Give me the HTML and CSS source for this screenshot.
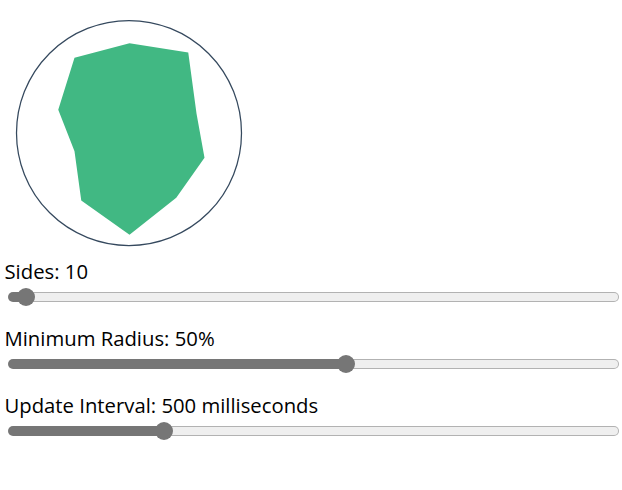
FILE: index.html
```html
<!DOCTYPE html>
<html>
<head>
<meta charset="utf-8">
<link rel="stylesheet" href="styles.css">
</head>
<body>
<svg class="shape" width="250" height="250" viewBox="0 0 200 200">
  <polygon class="poly" points="100.4,28.2 147.4,35.6 154,84.4 160.4,119.8 137.8,151.8 100.4,181.4 61.8,154 56.4,114.6 43.4,81.4 56.4,39.8"></polygon>
  <circle class="ring" cx="100" cy="100" r="90"></circle>
</svg>
<div class="control">
  <label class="label" for="sides">Sides: 10</label>
  <input class="range" id="sides" type="range" min="3" max="500" value="10" style="--fill: 2.8%">
</div>
<div class="control">
  <label class="label" for="minr">Minimum Radius: 50%</label>
  <input class="range" id="minr" type="range" min="0" max="90" value="50" style="--fill: 55.5%">
</div>
<div class="control">
  <label class="label" for="interval">Update Interval: 500 milliseconds</label>
  <input class="range" id="interval" type="range" min="10" max="2000" value="500" style="--fill: 25.4%">
</div>
</body>
</html>
```
FILE: styles.css
```css
html, body {
  background: #fff;
}
body {
  margin: 0;
  padding: 7.5px 3px 0 4px;
  font-family: "Open Sans", "Noto Sans", sans-serif;
  font-size: 20.3px;
  color: #000;
}
.shape {
  display: block;
  width: 250px;
  height: 250px;
  margin-left: -0.5px;
}
.poly {
  fill: #41b883;
}
.ring {
  fill: transparent;
  stroke: #35495e;
  stroke-width: 1;
}
.control:first-of-type {
  margin-top: 1.5px;
}
.label {
  display: block;
  line-height: 24px;
  height: 24px;
  margin-left: 0.5px;
}
.range {
  -webkit-appearance: none;
  appearance: none;
  display: block;
  width: 611px;
  height: 18px;
  margin: 5px 0 20px 4px;
  padding: 0;
  background: transparent;
}
.range::-webkit-slider-runnable-track {
  height: 10px;
  box-sizing: border-box;
  border: 1px solid transparent;
  border-radius: 5px;
  background:
    linear-gradient(to right, #767676 var(--fill), #efefef var(--fill)) padding-box,
    linear-gradient(to right, #767676 var(--fill), #b2b2b2 var(--fill)) border-box;
}
.range::-webkit-slider-thumb {
  -webkit-appearance: none;
  appearance: none;
  width: 18px;
  height: 18px;
  border: none;
  border-radius: 50%;
  background: #767676;
  margin-top: -5px;
}
```
